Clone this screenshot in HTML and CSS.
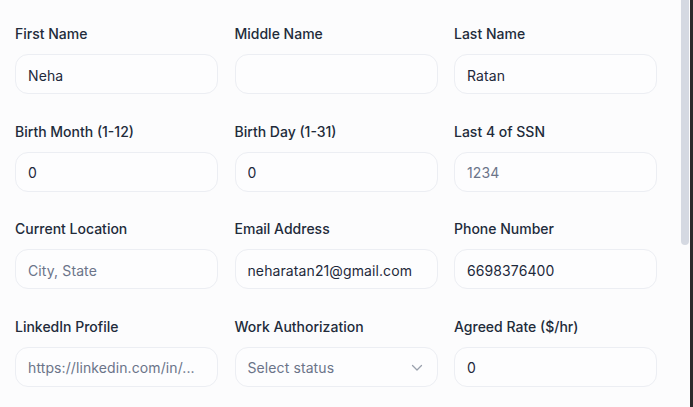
FILE: index.html
```html
<!DOCTYPE html>
<html>
<head>
<meta charset="utf-8">
<link rel="stylesheet" href="styles.css">
</head>
<body>
<div class="frame">
  <main class="content">
    <form class="form-grid">
      <div class="field"><label class="label">First Name</label><input class="input" value="Neha"></div>
      <div class="field"><label class="label">Middle Name</label><input class="input" value=""></div>
      <div class="field"><label class="label">Last Name</label><input class="input" value="Ratan"></div>

      <div class="field"><label class="label">Birth Month (1-12)</label><input class="input" value="0"></div>
      <div class="field"><label class="label">Birth Day (1-31)</label><input class="input" value="0"></div>
      <div class="field"><label class="label">Last 4 of SSN</label><input class="input" placeholder="1234"></div>

      <div class="field"><label class="label">Current Location</label><input class="input" placeholder="City, State"></div>
      <div class="field"><label class="label">Email Address</label><input class="input" value="neharatan21@gmail.com"></div>
      <div class="field"><label class="label">Phone Number</label><input class="input" value="6698376400"></div>

      <div class="field"><label class="label">LinkedIn Profile</label><input class="input" placeholder="https://linkedin.com/in/..."></div>
      <div class="field"><label class="label">Work Authorization</label>
        <div class="input select"><span class="select-text">Select status</span>
          <svg class="chev" width="12" height="8" viewBox="0 0 12 8"><path d="M1.5 1.5 L6 6 L10.5 1.5" fill="none" stroke="#9aa1ad" stroke-width="1.3" stroke-linecap="round" stroke-linejoin="round"/></svg>
        </div>
      </div>
      <div class="field"><label class="label">Agreed Rate ($/hr)</label><input class="input" value="0"></div>
    </form>
  </main>
  <div class="scrollbar"><div class="thumb"></div></div>
  <div class="edge"></div>
</div>
</body>
</html>
```

FILE: styles.css
```css
html, body {
  margin: 0;
  padding: 0;
  height: 100%;
  overflow: hidden;
}
body {
  background: #fcfcfd;
  font-family: Inter, "Noto Sans", sans-serif;
}
.frame {
  display: flex;
  height: 407px;
}
.content {
  flex: 1;
  padding: 24px 23px 0 15px;
}
.form-grid {
  display: grid;
  grid-template-columns: repeat(3, 1fr);
  column-gap: 16.5px;
  row-gap: 27.6px;
  margin: 0;
}
.field {
  display: flex;
  flex-direction: column;
}
.label {
  font-size: 14px;
  line-height: 20px;
  font-weight: 500;
  color: #222b3a;
  margin-bottom: 10px;
}
.input {
  box-sizing: border-box;
  height: 40px;
  width: 100%;
  border: 1px solid #eceef3;
  border-radius: 13px;
  background: #fdfdfe;
  padding: 2px 12px 0 12px;
  font-family: Inter, "Noto Sans", sans-serif;
  font-size: 14px;
  letter-spacing: 0.1px;
  color: #1e293b;
  outline: none;
}
.input::placeholder {
  color: #6b7489;
}
.select {
  display: flex;
  align-items: center;
  justify-content: space-between;
  padding-right: 14px;
}
.select-text {
  color: #6b7489;
}
.scrollbar {
  width: 10px;
  padding-left: 1px;
  box-sizing: border-box;
}
.thumb {
  width: 8px;
  height: 245px;
  background: #d5d9e2;
  border-radius: 0 0 4px 4px;
}
.edge {
  width: 3px;
  background: #2b2b2b;
}
```
